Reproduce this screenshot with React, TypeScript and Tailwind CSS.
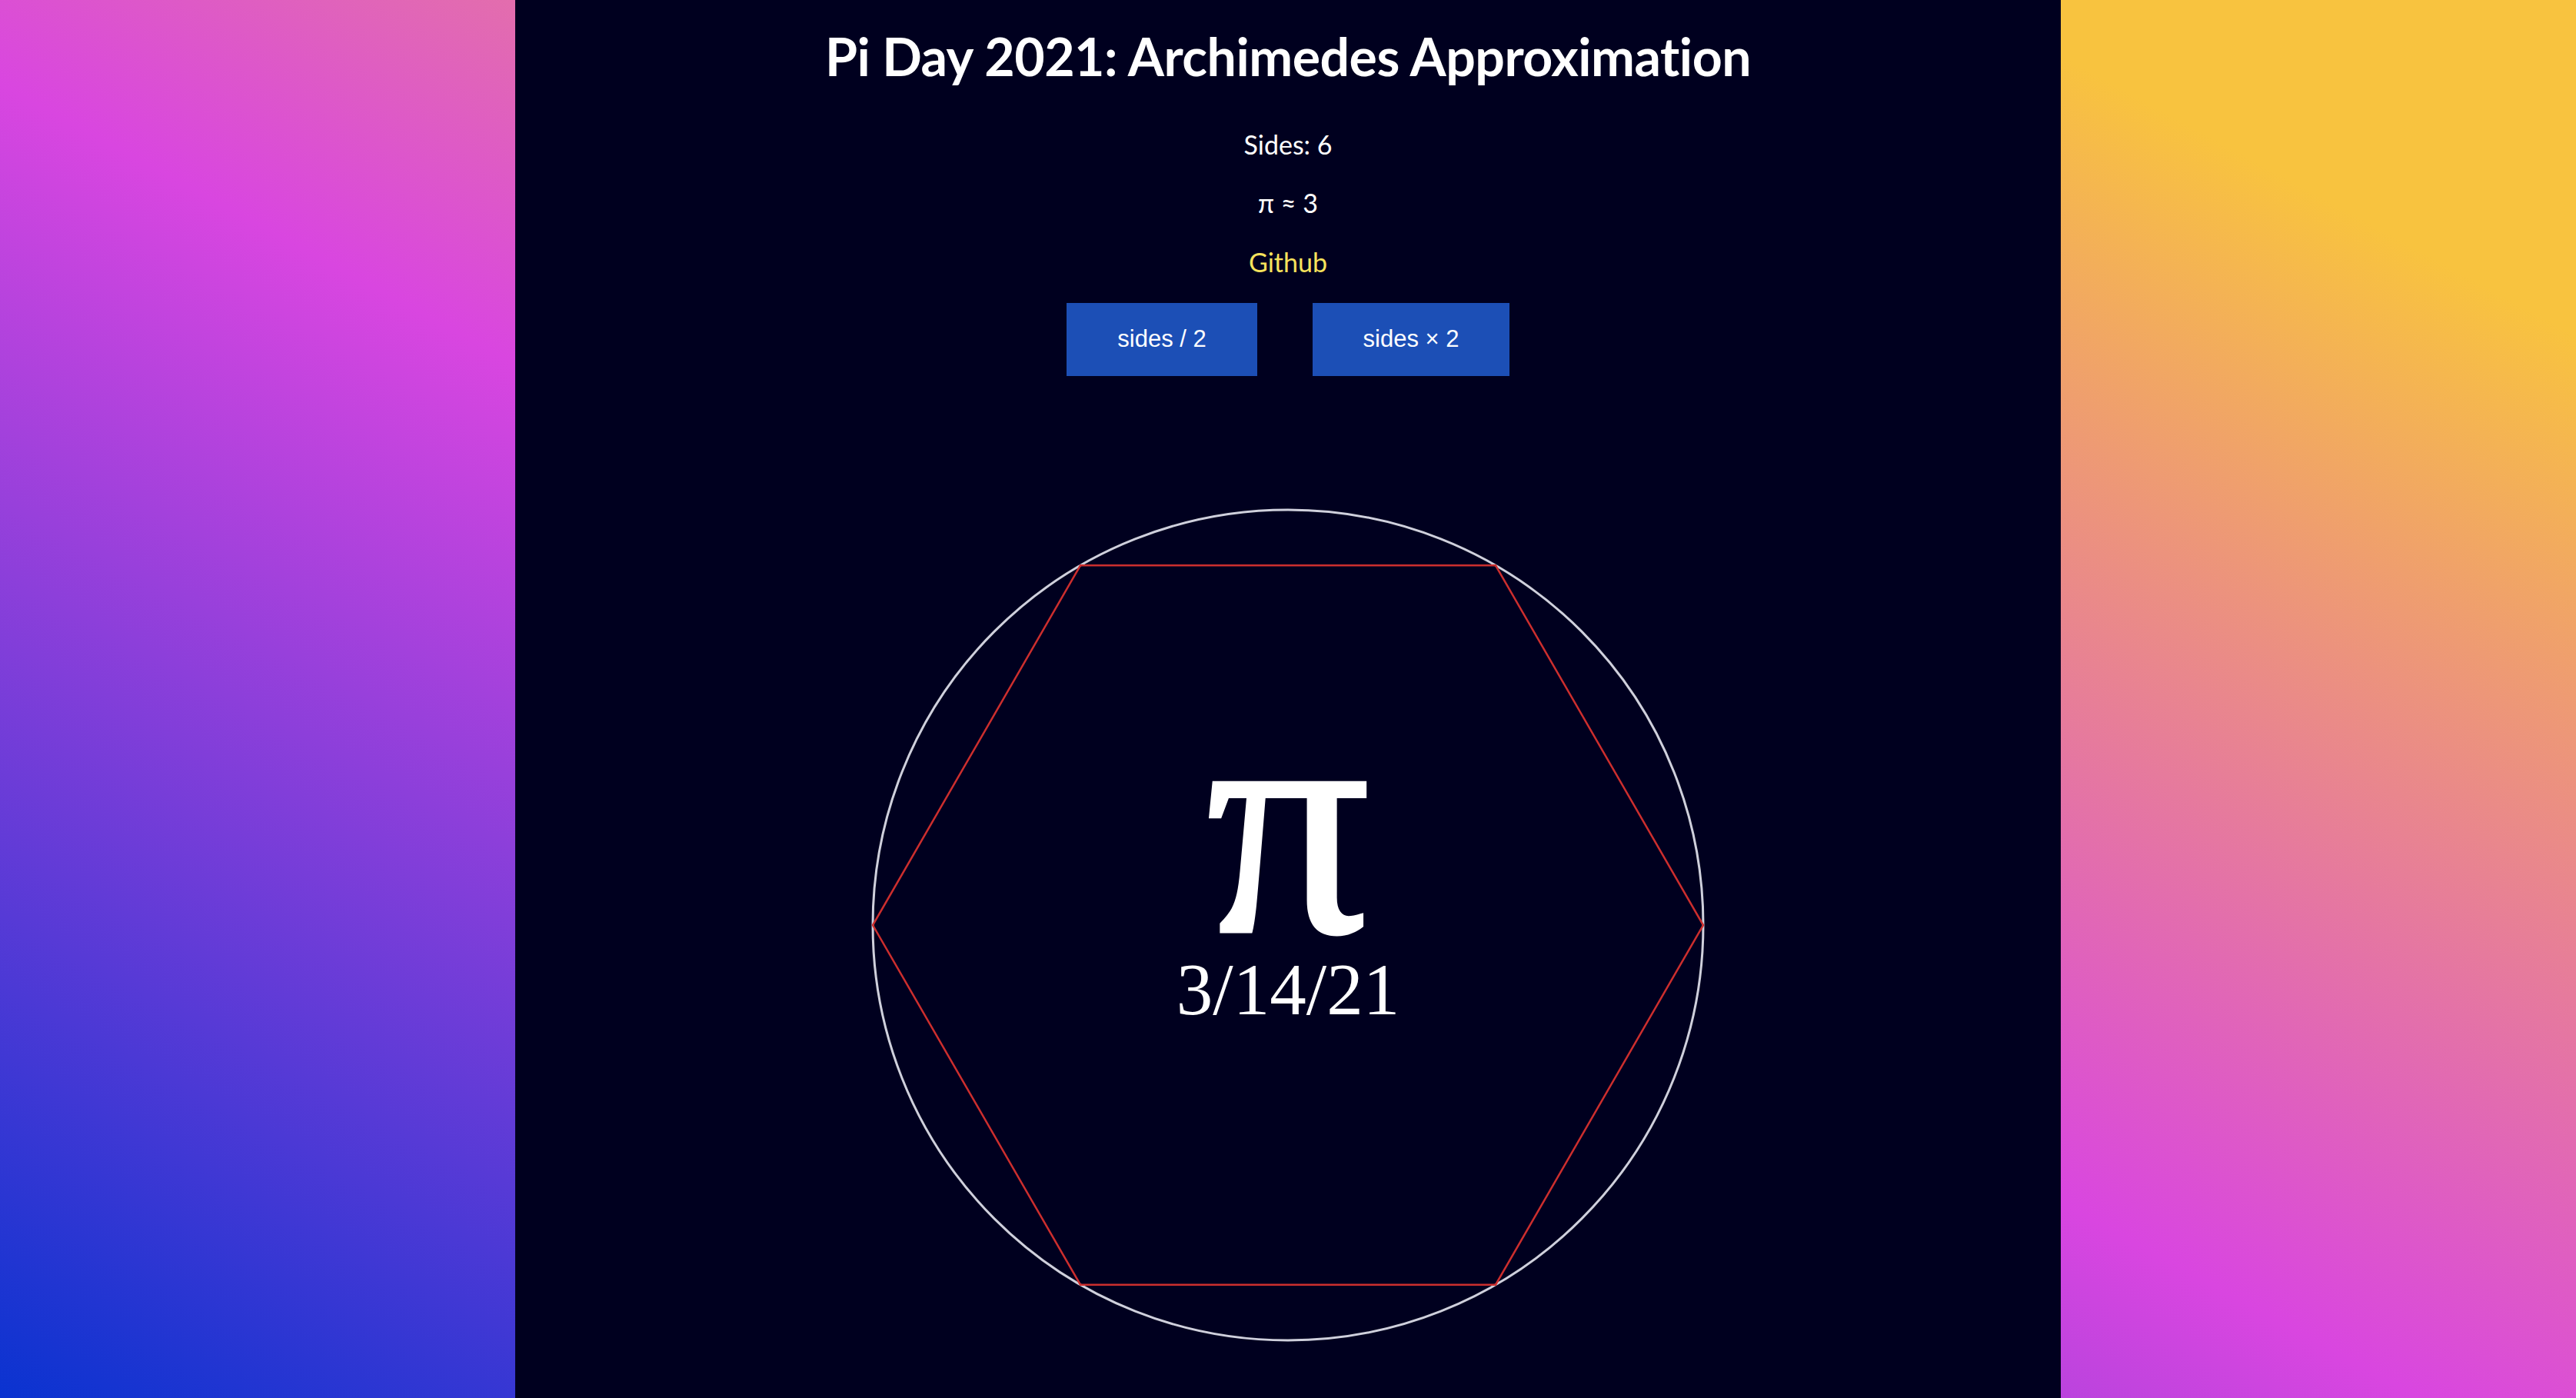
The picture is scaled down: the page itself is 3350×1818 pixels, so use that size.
import { useState } from "react";

// hexagon etc. drawn around a circle of radius R
const R = 540;
const SIZE = 1090;

function polygonPoints(sides: number) {
  const c = SIZE / 2;
  const pts: string[] = [];
  for (let i = 0; i < sides; i++) {
    const a = (i * 2 * Math.PI) / sides;
    pts.push(`${(c + R * Math.cos(a)).toFixed(2)},${(c + R * Math.sin(a)).toFixed(2)}`);
  }
  return pts.join(" ");
}

function approxPi(sides: number) {
  // perimeter of inscribed polygon / diameter
  return sides * Math.sin(Math.PI / sides);
}

export default function App() {
  const [sides, setSides] = useState(6);
  const pi = approxPi(sides);
  const piText = sides === 6 ? "3" : pi.toFixed(6);

  return (
    <div className="h-screen w-full bg-linear-to-tr/srgb from-[#0a33d0] via-[#d946e0] via-47% to-[#f8c33f] to-88%">
      <div className="mx-auto flex h-full w-[60%] flex-col items-center bg-[#00001f] font-['Lato',sans-serif] text-white">
        <h1 className="mt-[32px] text-[68px] font-bold leading-[1.2] tracking-[-0.5px]">
          Pi Day 2021: Archimedes Approximation
        </h1>
        <p className="mt-[54px] text-[34px] leading-[1.2]">Sides: {sides}</p>
        <p className="mt-[36px] text-[34px] leading-[1.2]">π ≈ {piText}</p>
        <a href="#" className="mt-[36px] text-[34px] leading-[1.2] text-[#f7e25c]">
          Github
        </a>
        <div className="mt-[32px] flex gap-[72px] font-['Liberation_Sans',Arial,sans-serif] text-[31px]">
          <button
            onClick={() => setSides((s) => Math.max(3, Math.floor(s / 2)))}
            className="h-[95px] w-[248px] bg-[#1c4fb6] text-white"
          >
            sides / 2
          </button>
          <button
            onClick={() => setSides((s) => s * 2)}
            className="h-[95px] w-[256px] bg-[#1c4fb6] text-white"
          >
            sides × 2
          </button>
        </div>

        <div className="relative mt-[169px]">
          <svg width={SIZE} height={SIZE} viewBox={`0 0 ${SIZE} ${SIZE}`}>
            <circle cx={SIZE / 2} cy={SIZE / 2} r={R} fill="none" stroke="#cfd0dc" strokeWidth={3} />
            <polygon points={polygonPoints(sides)} fill="none" stroke="#cc2e2e" strokeWidth={2.5} />
          </svg>
          <div className="absolute inset-0 flex flex-col items-center pt-[202px] font-['Liberation_Serif','Times_New_Roman',serif]">
            <span className="text-[420px] leading-[1] [-webkit-text-stroke:5px_white]">π</span>
            <span className="mt-[-40px] text-[95px] leading-[1]">3/14/21</span>
          </div>
        </div>
      </div>
    </div>
  );
}
